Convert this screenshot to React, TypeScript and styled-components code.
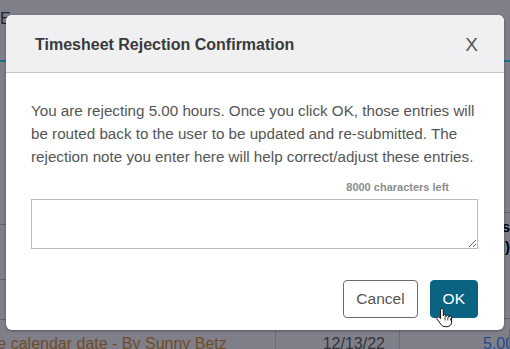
import { FC } from "react";
import styled, { createGlobalStyle } from "styled-components";

const GlobalStyle = createGlobalStyle`
  html, body {
    margin: 0;
    padding: 0;
    width: 510px;
    height: 349px;
    overflow: hidden;
    background: #ffffff;
    font-family: "Liberation Sans", Arial, sans-serif;
  }
  * { box-sizing: border-box; }
`;

const App: FC = () => {
  return (
    <Page>
      <GlobalStyle />
      <TopBar>
        <span>E</span>
      </TopBar>
      <Upper>
        <LeftCol>
          <Cell h={163} />
          <Cell h={55} />
          <Cell h={40} />
        </LeftCol>
        <RightCol>
          <Cell h={151} />
          <HeadCell>
            <b>Hours</b>
            <b>(HH:MM)</b>
          </HeadCell>
        </RightCol>
      </Upper>
      <Row>
        <RowText indent={-16} tone="link">the calendar date - By Sunny Betz</RowText>
        <RowText align="right">12/13/22</RowText>
        <RowText tone="num">5.00</RowText>
      </Row>

      <Overlay />

      <Modal>
        <Header>
          <Title>Timesheet Rejection Confirmation</Title>
          <Close>X</Close>
        </Header>
        <Body>
          <Message>
            You are rejecting 5.00 hours. Once you click OK, those entries will
            be routed back to the user to be updated and re-submitted. The
            rejection note you enter here will help correct/adjust these entries.
          </Message>
          <Counter>8000 characters left</Counter>
          <Note />
        </Body>
        <Footer>
          <Button>Cancel</Button>
          <Button primary>OK</Button>
        </Footer>
        <Pointer viewBox="0 0 18 24" width="18" height="24">
          <path
            d="M6 1.5c-.8 0-1.5.7-1.5 1.5v8.6l-1.3-1.3c-.6-.6-1.6-.6-2.1 0-.5.5-.5 1.3 0 1.9l3.9 5.2c1 1.4 2.5 2.3 4.2 2.3h1.9c2.5 0 4.5-2 4.5-4.5v-4.8c0-.8-.6-1.4-1.4-1.4s-1.4.6-1.4 1.4v-.8c0-.8-.6-1.4-1.4-1.4s-1.4.6-1.4 1.4v-.6c0-.8-.6-1.4-1.4-1.4s-1.3.6-1.3 1.4V3c0-.8-.7-1.5-1.5-1.5z"
            fill="#fff"
            stroke="#111"
            strokeWidth="1"
            strokeLinejoin="round"
          />
          <path d="M9 9.5v4M11.8 10.3v3.2M14.6 11.1v2.4" stroke="#111" strokeWidth="0.8" />
        </Pointer>
      </Modal>
    </Page>
  );
};

export default App;

const Page = styled.div`
  position: relative;
  width: 510px;
  height: 349px;
  overflow: hidden;
  background: #ffffff;
`;

const TopBar = styled.div`
  height: 62px;
  border-bottom: 2px solid #2ce6f0;
  padding: 10px 0 0 0;
  font-size: 16px;
  color: #444;
`;

const Upper = styled.div`
  display: flex;
  justify-content: space-between;
  height: 267px;
`;

const LeftCol = styled.div`
  width: 6px;
  display: flex;
  flex-direction: column;
`;

const RightCol = styled.div`
  width: 10px;
  display: flex;
  flex-direction: column;
`;

const Cell = styled.div<{ h: number }>`
  height: ${(p) => p.h}px;
  border-bottom: 1px solid #c8c8cc;
`;

const HeadCell = styled.div`
  height: 106px;
  display: flex;
  flex-direction: column;
  justify-content: flex-start;
  padding-top: 4px;
  font-size: 15px;
  line-height: 20px;
  color: #000;
  direction: rtl;
  overflow: hidden;
  border-bottom: 1px solid #c8c8cc;
  b { white-space: nowrap; }
`;

const Row = styled.div`
  display: grid;
  grid-template-columns: 276px 124px 110px;
  height: 20px;
`;

const RowText = styled.div<{ align?: string; tone?: "link" | "num"; indent?: number }>`
  font-size: 16px;
  padding: 6px 14px 0 ${(p) => (p.tone === "num" ? 83 : 0)}px;
  text-align: ${(p) => p.align || "left"};
  text-indent: ${(p) => p.indent || 0}px;
  white-space: nowrap;
  overflow: hidden;
  color: ${(p) => (p.tone === "link" ? "#e0983c" : p.tone === "num" ? "#3c9cff" : "#686868")};
  border-right: 1px solid #d8d8dc;
`;

const Overlay = styled.div`
  position: absolute;
  inset: 0;
  background: rgba(0, 0, 20, 0.5);
`;

const Modal = styled.div`
  position: absolute;
  left: 6px;
  top: 15px;
  width: 498px;
  height: 315px;
  background: #ffffff;
  border-radius: 6px;
  box-shadow: 0 1px 3px rgba(0, 0, 0, 0.35);
  display: flex;
  flex-direction: column;
  overflow: visible;
`;

const Header = styled.div`
  height: 58px;
  display: flex;
  align-items: center;
  justify-content: space-between;
  padding: 2px 26px 0 29px;
  background: #f0f0f2;
  border-bottom: 1px solid #c6c6c8;
  border-radius: 6px 6px 0 0;
`;

const Title = styled.h2`
  margin: 0;
  font-size: 16px;
  font-weight: bold;
  color: #3a3a3a;
`;

const Close = styled.span`
  font-size: 19px;
  color: #555;
`;

const Body = styled.div`
  padding: 26px 26px 0 25px;
  display: flex;
  flex-direction: column;
`;

const Message = styled.p`
  margin: 0 -13px 0 0;
  font-size: 15.2px;
  line-height: 23px;
  color: #555;
`;

const Counter = styled.div`
  align-self: flex-end;
  margin: 13px 29px 0 0;
  font-size: 11px;
  font-weight: bold;
  color: #8c8c8c;
`;

const Note = styled.textarea`
  margin-top: 6px;
  width: 447px;
  height: 50px;
  border: 1px solid #bdbdbd;
  resize: vertical;
  font-family: inherit;
  outline: none;
`;

const Footer = styled.div`
  margin-top: auto;
  display: flex;
  justify-content: flex-end;
  gap: 12px;
  padding: 0 26px 12px 0;
`;

const Button = styled.button<{ primary?: boolean }>`
  height: 38px;
  padding: 0 12px;
  border-radius: 4px;
  font-family: inherit;
  font-size: 15.5px;
  border: 1px solid ${(p) => (p.primary ? "#0b6382" : "#6a6a6a")};
  background: ${(p) => (p.primary ? "#0b6382" : "#ffffff")};
  color: ${(p) => (p.primary ? "#ffffff" : "#555")};
`;

const Pointer = styled.svg`
  position: absolute;
  left: 430px;
  top: 292px;
`;
